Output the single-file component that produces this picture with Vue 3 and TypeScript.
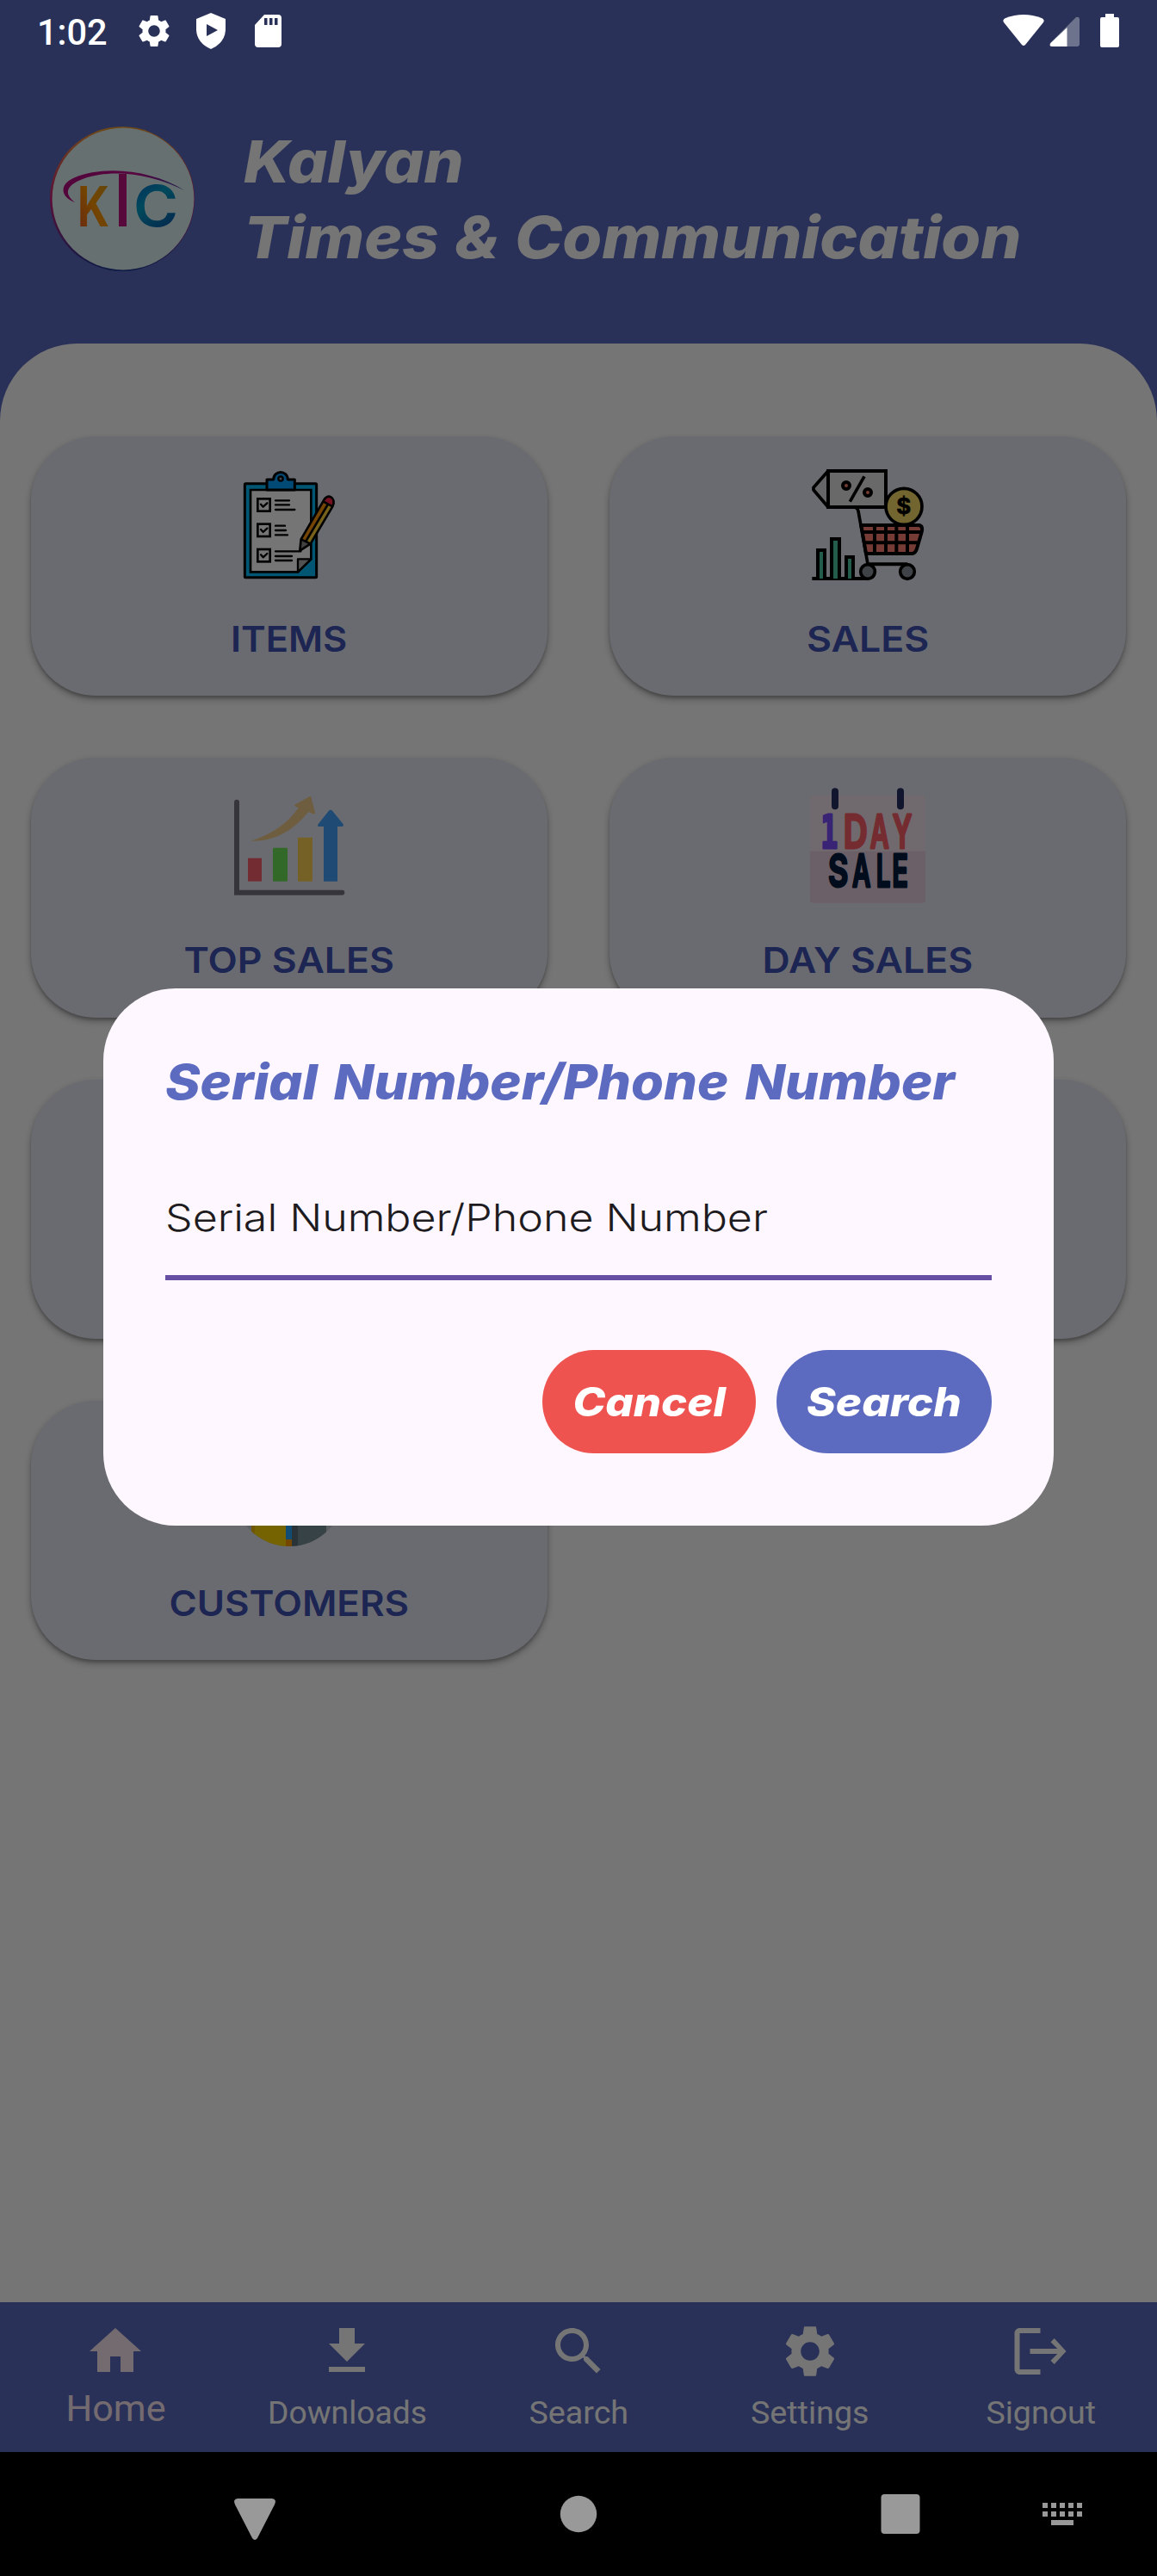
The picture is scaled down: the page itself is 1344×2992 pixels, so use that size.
<script setup lang="ts">
import type { Directive } from 'vue'

// Stretches a single line of text horizontally to the given width in pixels.
const vFit: Directive<HTMLElement, number> = {
  mounted(el, binding) {
    const w = el.offsetWidth
    if (w > 0) el.style.transform = `scaleX(${binding.value / w})`
  },
}

interface Tile {
  id: string
  label: string
  width: number
}

const tiles: Tile[] = [
  { id: 'items', label: 'ITEMS', width: 135 },
  { id: 'sales', label: 'SALES', width: 142 },
  { id: 'top', label: 'TOP SALES', width: 245 },
  { id: 'day', label: 'DAY SALES', width: 245 },
  { id: 'blank1', label: '', width: 0 },
  { id: 'blank2', label: '', width: 0 },
  { id: 'customers', label: 'CUSTOMERS', width: 279 },
]

interface Tab {
  label: string
  path: string
  width: number
  active?: boolean
}

const tabs: Tab[] = [
  { label: 'Home', width: 116, active: true, path: 'M10 20v-6h4v6h5v-8h3L12 3 2 12h3v8z' },
  { label: 'Downloads', width: 185, path: 'M19 9h-4V3H9v6H5l7 7 7-7zM5 18v2h14v-2H5z' },
  {
    label: 'Search',
    width: 116,
    path: 'M15.5 14h-.79l-.28-.27C15.41 12.59 16 11.11 16 9.5 16 5.91 13.09 3 9.5 3S3 5.91 3 9.5 5.91 16 9.5 16c1.61 0 3.09-.59 4.23-1.57l.27.28v.79l5 4.99L20.49 19l-4.99-5zm-6 0C7.01 14 5 11.99 5 9.5S7.01 5 9.5 5 14 7.01 14 9.5 11.99 14 9.5 14z',
  },
  {
    label: 'Settings',
    width: 137,
    path: 'M19.14 12.94c.04-.3.06-.61.06-.94 0-.32-.02-.64-.07-.94l2.03-1.58c.18-.14.23-.41.12-.61l-1.92-3.32c-.12-.22-.37-.29-.59-.22l-2.39.96c-.5-.38-1.03-.7-1.62-.94l-.36-2.54c-.04-.24-.24-.41-.48-.41h-3.84c-.24 0-.43.17-.47.41l-.36 2.54c-.59.24-1.13.57-1.62.94l-2.39-.96c-.22-.08-.47 0-.59.22L2.74 8.87c-.12.21-.08.47.12.61l2.03 1.58c-.05.3-.09.63-.09.94s.02.64.07.94l-2.03 1.58c-.18.14-.23.41-.12.61l1.92 3.32c.12.22.37.29.59.22l2.39-.96c.5.38 1.03.7 1.62.94l.36 2.54c.05.24.24.41.48.41h3.84c.24 0 .44-.17.47-.41l.36-2.54c.59-.24 1.13-.56 1.62-.94l2.39.96c.22.08.47 0 .59-.22l1.92-3.32c.12-.22.07-.47-.12-.61l-2.01-1.58zM12 15.6c-1.98 0-3.6-1.62-3.6-3.6s1.62-3.6 3.6-3.6 3.6 1.62 3.6 3.6-1.62 3.6-3.6 3.6z',
  },
  {
    label: 'Signout',
    width: 127,
    path: 'M11.5 3H3.5C2.4 3 1.5 3.9 1.5 5v14c0 1.1.9 2 2 2h8v-2h-8V5h8V3zM16.9 7 15.5 8.4 18.1 11H7.5v2h10.6l-2.6 2.6 1.4 1.4 4.6-5z',
  },
]

const gear = tabs[3].path
const checks = [0, 88, 176]
</script>

<template>
  <div class="screen">
    <div class="page">
      <header class="header">
        <svg class="logo" viewBox="0 0 168 168">
          <defs>
            <linearGradient id="ring" x1="0" y1="0" x2="0" y2="1">
              <stop offset="0" stop-color="#f0a030" />
              <stop offset=".5" stop-color="#c81e78" />
              <stop offset="1" stop-color="#1e3c96" />
            </linearGradient>
            <linearGradient id="swoosh" x1="0" x2="1">
              <stop offset="0" stop-color="#b40a82" />
              <stop offset=".6" stop-color="#be0f8c" />
              <stop offset="1" stop-color="#3c3ca8" />
            </linearGradient>
            <linearGradient id="kfill" x1="0" y1="1" x2="1" y2="0">
              <stop offset="0" stop-color="#e84e28" />
              <stop offset=".5" stop-color="#fa9600" />
              <stop offset="1" stop-color="#d29b28" />
            </linearGradient>
            <linearGradient id="cfill" x1="0" y1="0" x2=".5" y2="1">
              <stop offset="0" stop-color="#1450c8" />
              <stop offset=".5" stop-color="#00a0c8" />
              <stop offset="1" stop-color="#0a5aaa" />
            </linearGradient>
          </defs>
          <circle cx="84" cy="84" r="84" fill="url(#ring)" />
          <circle cx="85" cy="84" r="82.4" fill="#e1f3f3" />
          <path d="M29 88C12 82 11 67 27 60c37-16 92-9 129 14C119 56 74 48 38 61c-21 8-21 18-9 27z" fill="url(#swoosh)" />
          <rect x="80" y="55" width="9" height="61" fill="#be1482" />
          <text x="32" y="115.500" font-size="65" font-weight="700" textLength="37" lengthAdjust="spacingAndGlyphs" fill="url(#kfill)">K</text>
          <text x="97" y="115.500" font-size="66" font-weight="600" textLength="52" lengthAdjust="spacingAndGlyphs" fill="url(#cfill)">C</text>
        </svg>
        <h1 class="brand">
          <span v-fit="255">Kalyan</span>
          <span v-fit="904">Times &amp; Communication</span>
        </h1>
      </header>

      <main class="sheet">
        <div v-for="t in tiles" :key="t.id" class="tile">
          <!-- clipboard with a checklist and pencil -->
          <svg v-if="t.id === 'items'" class="art" viewBox="78 60 420 420" stroke-linejoin="round" stroke-linecap="round">
            <rect x="133" y="125" width="250" height="327" rx="3" fill="#00bcfa" stroke="#000" stroke-width="9" />
            <path d="M153 147H364V388L318 433H153z" fill="#fff" stroke="#000" stroke-width="8" stroke-linejoin="miter" />
            <path d="M318 388h46l-46 45z" fill="#b4b4b4" stroke="#000" stroke-width="7" />
            <path d="M210 111h23c1-34 49-34 50 0h24v36h-97z" fill="#00a1fe" stroke="#000" stroke-width="9" />
            <circle cx="258" cy="108" r="8" fill="#999" stroke="#000" stroke-width="7" />
            <g v-for="d in checks" :key="d" :transform="`translate(0 ${d})`" fill="none" stroke="#000">
              <rect x="178" y="178" width="43" height="43" stroke-width="8" stroke-linejoin="miter" />
              <path d="M189 197l8 9 14-13" stroke-width="7" />
            </g>
            <path d="M240 184h48M240 199h48M240 216h67M240 272h33M240 288h36M240 304h42M240 361h88M240 378h57M240 393h57" fill="none" stroke="#000" stroke-width="7" />
            <path d="M329 319L406 187 423 197 346 326z" fill="#fb9506" />
            <path d="M346 326L423 197 439 205 362 335z" fill="#ffd338" />
            <path d="M406 187C419 154 455 174 439 205z" fill="#ff2346" />
            <path d="M329 319l33 16-37 24z" fill="#8e8e8e" />
            <path d="M329 319L406 187C419 154 455 174 439 205L362 335 325 359zM329 319l33 16M406 187l33 18M346 326L423 197" fill="none" stroke="#000" stroke-width="8" />
          </svg>

          <!-- price tag, coin and shopping cart over a bar chart -->
          <svg v-else-if="t.id === 'sales'" class="art" viewBox="174 60 420 420" stroke="#000">
            <path d="M246 81L195 139v8l51 60z" fill="#dcdde2" stroke-width="11" stroke-linejoin="round" />
            <rect x="246" y="81" width="201" height="126" fill="#e4e4e8" stroke-width="12" />
            <path d="M372 100L322 188" stroke-width="11" />
            <circle cx="309" cy="132" r="12" fill="#ff8070" stroke-width="12" />
            <circle cx="384" cy="156" r="12" fill="#ff8070" stroke-width="12" />
            <path d="M361 270H564q13 4 8 24L555 352q-5 16-17 17H378z" fill="#ff8272" stroke-width="12" stroke-linejoin="round" />
            <path d="M408 270v98M447 270v98M484 270v98M522 270v98M366 294H573M372 331H560" stroke-width="12" fill="none" />
            <path d="M333 207q15 0 18 14L384 405" fill="none" stroke-width="11" />
            <path d="M384 406H522" stroke-width="12" />
            <circle cx="510" cy="205" r="63" fill="#fadc68" stroke-width="11" />
            <text x="484" y="232" font-size="75" font-weight="700" textLength="51" lengthAdjust="spacingAndGlyphs" fill="#000" stroke-width="2">$</text>
            <path d="M190 456H385" stroke-width="12" />
            <g fill="#50c8a5" stroke-width="12">
              <path d="M210 456V357h24v99M258 456V318h27v138M309 456V381h24v75" />
            </g>
            <circle cx="384" cy="432" r="25" fill="#8a929c" stroke-width="11" />
            <circle cx="522" cy="432" r="25" fill="#8a929c" stroke-width="11" />
          </svg>

          <!-- rising bar chart -->
          <svg v-else-if="t.id === 'top'" class="art" viewBox="78 40 420 420">
            <path d="M105 96V411H472" fill="none" stroke="#777584" stroke-width="18" stroke-linecap="round" />
            <rect x="144" y="291" width="48" height="81" fill="#fc606f" />
            <rect x="231" y="255" width="51" height="117" rx="3" fill="#6de45a" />
            <rect x="318" y="219" width="51" height="153" rx="2" fill="#ffd353" />
            <path d="M408 372V181H391q-6-1-2-8L425 127q7-7 14 0l37 46q3 7-4 8H456V372z" fill="#43a1fc" />
            <path d="M156 231Q265 196 320 116L304 107 361 75Q364 76 365 82L378 132Q377 140 370 137L355 130Q270 235 156 231z" fill="#f1ca8b" />
          </svg>

          <!-- tear-off calendar -->
          <svg v-else-if="t.id === 'day'" class="art" viewBox="114 40 420 420">
            <rect x="123" y="72" width="402" height="375" rx="11" fill="#f3e4ed" />
            <path d="M123 267H525V436q0 11-11 11H134q-11 0-11-11z" fill="#ebd1e2" />
            <path d="M210 59v51M438 59v51" stroke="#273064" stroke-width="24" stroke-linecap="round" />
            <g font-weight="600" stroke-width="9" stroke-linejoin="round">
              <text x="160" y="256" font-size="160" font-weight="700" class="serifed" textLength="60" lengthAdjust="spacingAndGlyphs" fill="#7c4eff" stroke="#7c4eff">1</text>
              <g font-size="160" fill="#ff606a" stroke="#ff606a">
                <text x="239" y="256" textLength="84" lengthAdjust="spacingAndGlyphs">D</text>
                <text x="332" y="256" textLength="66" lengthAdjust="spacingAndGlyphs">A</text>
                <text x="410" y="256" textLength="68" lengthAdjust="spacingAndGlyphs">Y</text>
              </g>
              <g font-size="157" fill="#041c3d" stroke="#041c3d">
                <text x="186" y="392" textLength="70" lengthAdjust="spacingAndGlyphs">S</text>
                <text x="270" y="392" textLength="64" lengthAdjust="spacingAndGlyphs">A</text>
                <text x="353" y="392" textLength="50" lengthAdjust="spacingAndGlyphs">L</text>
                <text x="409" y="392" textLength="56" lengthAdjust="spacingAndGlyphs">E</text>
              </g>
            </g>
          </svg>

          <!-- two people in a round badge -->
          <svg v-else-if="t.id === 'customers'" class="art" viewBox="0 0 140 140">
            <clipPath id="badge"><circle cx="70" cy="72" r="64" /></clipPath>
            <g clip-path="url(#badge)">
              <rect width="140" height="140" fill="#c6cdd8" />
              <rect x="26" y="80" width="40" height="60" fill="#ffd500" />
              <rect x="26" y="80" width="4" height="60" fill="#f0be00" />
              <rect x="66" y="80" width="7" height="48" fill="#26a6fe" />
              <rect x="66" y="128" width="7" height="12" fill="#ff9800" />
              <rect x="73" y="80" width="7" height="60" fill="#5c7078" />
              <rect x="80" y="80" width="33" height="60" fill="#78909c" />
            </g>
          </svg>
          <span v-else class="art"></span>
          <span v-if="t.label" v-fit="t.width" class="tile-label">{{ t.label }}</span>
        </div>
      </main>

      <nav class="tabs">
        <a v-for="t in tabs" :key="t.label" class="tab" :class="{ active: t.active }">
          <svg viewBox="0 0 24 24"><path :d="t.path" /></svg>
          <span v-fit="t.width">{{ t.label }}</span>
        </a>
      </nav>
      <div class="scrim"></div>
    </div>

    <footer class="system-nav">
      <svg viewBox="0 0 1344 144" fill="#999">
        <path d="M276 54h40q6 1 3 7L299 100q-3 4-6 0L273 61q-3-6 3-7z" />
        <circle cx="672" cy="72" r="21.200" />
        <rect x="1023.500" y="49" width="45" height="46" rx="4" />
        <path d="M1211 59h6v6h-6zM1221 59h6v6h-6zM1231 59h6v6h-6zM1241 59h6v6h-6zM1251 59h6v6h-6zM1211 69h6v6h-6zM1221 69h6v6h-6zM1231 69h6v6h-6zM1241 69h6v6h-6zM1251 69h6v6h-6zM1221 79h26v6h-26z" />
      </svg>
    </footer>

    <div class="status">
      <span v-fit="82" class="clock">1:02</span>
      <svg viewBox="0 0 1200 72" fill="#fff">
        <svg x="12.500" y="13.500" width="45" height="45" viewBox="0 0 24 24"><path :d="gear" /></svg>
        <path fill-rule="evenodd" d="M101 15l17 7v13q-1 15-17 22q-16-7-17-22V22zM96 28v14l13-7z" />
        <path fill-rule="evenodd" d="M163 17h16q4 0 4 4v30q0 4-4 4h-23q-4 0-4-4V29zM163 21v8h3.500v-8zM169 21v8h3.500v-8zM175 21v8h3.500v-8z" />
        <path d="M1022 26Q1020 23 1024 21Q1045 13 1066 21Q1070 23 1068 26L1047 52q-2 2-4 0z" />
        <path d="M1106 20q4-1 4 3v28q0 3-3 3h-30q-3-1-1-4z" opacity=".32" />
        <path d="M1095.500 32v22h-18q-3-1-1-4z" />
        <path d="M1140 16h10v4h4q2 0 2 2v31q0 2-2 2h-18q-2 0-2-2V22q0-2 2-2h4z" />
      </svg>
    </div>

    <section class="dialog">
      <h2><span v-fit="917">Serial Number/Phone Number</span></h2>
      <div class="field"><span v-fit="700">Serial Number/Phone Number</span></div>
      <div class="actions">
        <button class="cancel"><span v-fit="178">Cancel</span></button>
        <button class="search"><span v-fit="180">Search</span></button>
      </div>
    </section>
  </div>
</template>

<style>
body {
  margin: 0;
  background: #000;
}
</style>

<style scoped>
.screen {
  position: relative;
  width: 1344px;
  height: 2992px;
  display: flex;
  flex-direction: column;
  overflow: hidden;
  font-family: Inter, "Open Sans", sans-serif;
}
.screen span {
  white-space: nowrap;
}
.page {
  position: relative;
  height: 2848px;
  display: flex;
  flex-direction: column;
  background: #5c6bc0;
}
.scrim {
  position: absolute;
  inset: 0;
  background: rgba(0, 0, 0, 0.54);
}
.header {
  display: flex;
  height: 252px;
  padding: 147px 0 0 58px;
}
.logo {
  width: 168px;
  height: 168px;
}
.brand {
  display: flex;
  flex-direction: column;
  align-items: flex-start;
  margin: -3px 0 0 57px;
  font-size: 68px;
  font-style: italic;
  font-weight: 800;
  line-height: 87.500px;
  word-spacing: 2px;
  color: #fff;
}
.brand span,
.dialog h2 span,
.field span,
.clock {
  display: inline-block;
  transform-origin: left center;
}
.sheet {
  flex: 1;
  box-sizing: border-box;
  display: grid;
  grid-template-columns: 600px 600px;
  grid-auto-rows: 301.300px;
  gap: 72px;
  align-content: start;
  padding: 108px 36px 0;
  border-radius: 90px 90px 0 0;
  background: #fff;
}
.tile {
  display: flex;
  flex-direction: column;
  align-items: center;
  box-sizing: border-box;
  padding-top: 33px;
  border-radius: 75px;
  background: #e8eaf6;
  box-shadow: 0 3px 3px rgba(0, 0, 0, 0.16), 0 4px 9px rgba(0, 0, 0, 0.3);
}
.art {
  width: 140px;
  height: 140px;
}
.serifed {
  font-family: "DejaVu Sans Mono", monospace;
}
.tile-label {
  margin-top: 37px;
  font-size: 41.500px;
  font-weight: 600;
  line-height: 50px;
  color: #3f51b5;
}
.tabs {
  display: flex;
  height: 174px;
  background: #5c6bc0;
}
.tab {
  flex: 1;
  display: flex;
  flex-direction: column;
  align-items: center;
  padding-top: 21px;
  font-family: Roboto, sans-serif;
  font-size: 36px;
  line-height: 44px;
  color: #fff;
}
.tab svg {
  width: 72px;
  height: 72px;
  fill: currentColor;
}
.tab span {
  margin-top: 14px;
}
.tab.active {
  font-size: 42px;
  color: #fbeaf4;
}
.tab.active span {
  margin-top: 9px;
}
.system-nav {
  height: 144px;
  background: #000;
}
.system-nav svg {
  display: block;
  width: 1344px;
  height: 144px;
}
.status {
  position: absolute;
  top: 0;
  left: 0;
  display: flex;
  align-items: center;
  height: 72px;
  padding-left: 43px;
  color: #fff;
}
.clock {
  width: max-content;
  margin-top: 3px;
  font-family: Roboto, sans-serif;
  font-size: 42px;
  font-weight: 500;
}
.status svg {
  position: absolute;
  left: 144px;
  top: 0;
}
.status > svg {
  width: 1200px;
  height: 72px;
}
.status svg svg {
  position: static;
}
.dialog {
  position: absolute;
  left: 120px;
  top: 1148px;
  width: 1104px;
  height: 624px;
  box-sizing: border-box;
  padding: 72px;
  border-radius: 84px;
  background: #fef7ff;
}
.dialog h2 {
  margin: 0;
  height: 73px;
  font-size: 57px;
  font-style: italic;
  font-weight: 800;
  line-height: 73px;
  word-spacing: 5px;
  color: #5c6bc0;
}
.field {
  box-sizing: border-box;
  height: 140px;
  margin-top: 54px;
  padding-top: 39px;
  border-bottom: 6px solid #6750a4;
  font-size: 44px;
  font-weight: 300;
  line-height: 56px;
  color: #1d1b20;
}
.actions {
  display: flex;
  justify-content: flex-end;
  gap: 24px;
  margin-top: 81px;
}
.actions button {
  display: flex;
  align-items: center;
  justify-content: center;
  height: 120px;
  padding: 0;
  border: 0;
  border-radius: 60px;
  font-family: inherit;
  font-size: 46px;
  font-style: italic;
  font-weight: 800;
  color: #fff;
}
.cancel {
  width: 248px;
  background: #ef5350;
}
.search {
  width: 250px;
  background: #5c6bc0;
}
</style>
